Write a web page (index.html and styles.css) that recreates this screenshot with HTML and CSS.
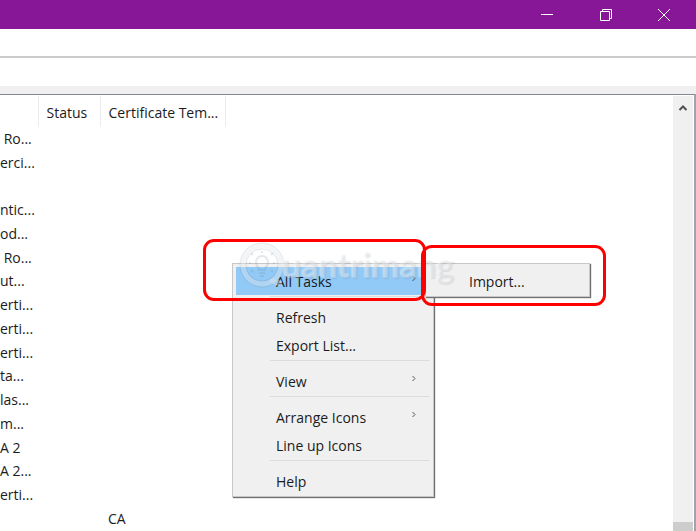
FILE: index.html
```html
<!DOCTYPE html>
<html lang="en">
<head>
<meta charset="utf-8">
<title>Certificates</title>
<link rel="stylesheet" href="styles.css">
</head>
<body>
<div class="window">
  <header class="titlebar">
    <button class="caption" aria-label="Minimize"><svg width="14" height="14" viewBox="0 0 14 14"><path d="M1 6.500h12"/></svg></button>
    <button class="caption" aria-label="Restore"><svg width="14" height="14" viewBox="0 0 14 14"><path d="M1.500 3.500h9v9h-9zM3.500 3.500v-2h9v9h-2"/></svg></button>
    <button class="caption" aria-label="Close"><svg width="14" height="14" viewBox="0 0 14 14"><path d="M1 1l12 12M13 1L1 13"/></svg></button>
  </header>
  <div class="menubar"></div>
  <div class="toolbar"></div>
  <main class="pane">
    <table class="list">
      <colgroup><col class="col-name"><col class="col-status"><col class="col-template"><col></colgroup>
      <thead><tr><th></th><th>Status</th><th>Certificate Tem...</th><th></th></tr></thead>
      <tbody>
        <tr><td> Ro...</td><td></td><td></td><td></td></tr>
        <tr><td>erci...</td><td></td><td></td><td></td></tr>
        <tr><td></td><td></td><td></td><td></td></tr>
        <tr><td>ntic...</td><td></td><td></td><td></td></tr>
        <tr><td>od...</td><td></td><td></td><td></td></tr>
        <tr><td> Ro...</td><td></td><td></td><td></td></tr>
        <tr><td>ut...</td><td></td><td></td><td></td></tr>
        <tr><td>erti...</td><td></td><td></td><td></td></tr>
        <tr><td>erti...</td><td></td><td></td><td></td></tr>
        <tr><td>erti...</td><td></td><td></td><td></td></tr>
        <tr><td>ta...</td><td></td><td></td><td></td></tr>
        <tr><td>las...</td><td></td><td></td><td></td></tr>
        <tr><td>m...</td><td></td><td></td><td></td></tr>
        <tr><td>A 2</td><td></td><td></td><td></td></tr>
        <tr><td>A 2...</td><td></td><td></td><td></td></tr>
        <tr><td>erti...</td><td></td><td></td><td></td></tr>
        <tr><td></td><td></td><td>CA</td><td></td></tr>
      </tbody>
    </table>
    <div class="scrollbar">
      <button class="scroll-up" aria-label="Scroll up"><svg width="10" height="8" viewBox="0 0 10 8"><path d="M1.500 6L5 2.500 8.500 6"/></svg></button>
      <div class="thumb"></div>
    </div>
  </main>
</div>

<div class="menu context" role="menu">
  <button class="item active" role="menuitem">All Tasks<svg class="arrow" width="6" height="8" viewBox="0 0 6 8"><path d="M1.500 1L4 3.500 1.500 6"/></svg></button>
  <hr>
  <button class="item" role="menuitem">Refresh</button>
  <button class="item" role="menuitem">Export List...</button>
  <hr>
  <button class="item" role="menuitem">View<svg class="arrow" width="6" height="8" viewBox="0 0 6 8"><path d="M1.500 1L4 3.500 1.500 6"/></svg></button>
  <hr>
  <button class="item" role="menuitem">Arrange Icons<svg class="arrow" width="6" height="8" viewBox="0 0 6 8"><path d="M1.500 1L4 3.500 1.500 6"/></svg></button>
  <button class="item" role="menuitem">Line up Icons</button>
  <hr>
  <button class="item" role="menuitem">Help</button>
</div>
<div class="menu submenu" role="menu">
  <button class="item" role="menuitem">Import...</button>
</div>

<div class="watermark">
  <svg width="48" height="48" viewBox="0 0 48 48">
    <g class="mark-shade"><circle cx="24" cy="24" r="22"/><circle cx="24" cy="24" r="16"/></g>
    <circle class="mark-ring" cx="24" cy="24" r="19"/>
    <path class="mark-ring" d="M33 38c3 4 6 4 11 4"/>
    <path class="mark-bulb" d="M21 29c0-3-3-4-3-8a6 6 0 0 1 12 0c0 4-3 5-3 8zM21 32h6M22 35h4M24 12v-2M15 14l-2-2M33 14l2-2M13 22h-2M35 22h2M15 29l-2 2M33 29l2 2"/>
  </svg>
  <span>uantrimang</span>
</div>
<div class="outline outline-tasks"></div>
<div class="outline outline-import"></div>
</body>
</html>
```

FILE: styles.css
```css
* { box-sizing: border-box; }

body {
  margin: 0;
  color: #1b1b1b;
  background: #fff;
  font: 14px/20px "Open Sans", "Noto Sans", sans-serif;
}

button {
  margin: 0;
  padding: 0;
  border: 0;
  background: none;
  color: inherit;
  font: inherit;
}

svg { fill: none; }

.window {
  display: flex;
  flex-direction: column;
  height: 100vh;
  overflow: hidden;
}

.titlebar {
  display: flex;
  flex: none;
  justify-content: flex-end;
  height: 29px;
  padding-right: 3px;
  background: #881798;
}

.caption {
  display: flex;
  align-items: center;
  justify-content: center;
  width: 58px;
}

.caption:first-child { width: 60px; }

.caption svg { stroke: #fff; }

.menubar {
  flex: none;
  height: 29px;
  border-bottom: 2px solid #cacaca;
}

.toolbar {
  flex: none;
  height: 36px;
  border-bottom: 8px solid #f0f0f0;
}

.pane {
  display: flex;
  flex: 1;
  min-height: 0;
  border-top: 1px solid #828790;
  border-right: 2px solid #a0a4aa;
  padding: 1px 1px 0 0;
}

.list {
  flex: 1;
  height: 100%;
  table-layout: fixed;
  border-collapse: collapse;
}

.col-name { width: 38px; }
.col-status { width: 62px; }
.col-template { width: 125px; }

.list th {
  height: 31px;
  padding: 2px 0 0 8px;
  border-right: 1px solid #ececec;
  font-weight: 400;
  text-align: left;
  white-space: nowrap;
}

.list th:last-child { border-right: 0; }

.list td {
  height: 23px;
  padding: 0 0 0 8px;
  white-space: pre;
}

.list td:first-child { padding-left: 0; }

.scrollbar {
  display: flex;
  flex-direction: column;
  justify-content: space-between;
  width: 20px;
  background: #f0f0f0;
}

.scroll-up {
  height: 24px;
  line-height: 0;
}

.scroll-up svg {
  stroke: #505050;
  stroke-width: 2;
}

.thumb {
  height: 9px;
  background: #cdcdcd;
}

.menu {
  position: absolute;
  top: 263px;
  padding: 3px 3px 1px;
  border: 1px solid #c8c8c8;
  background: #f0f0f0;
  box-shadow: 1px 1px 1px #707070;
}

.context {
  left: 232px;
  width: 202px;
}

.submenu {
  left: 425px;
  width: 165px;
}

.item {
  display: flex;
  align-items: center;
  justify-content: space-between;
  width: 100%;
  height: 28px;
  padding: 2px 13px 0 40px;
}

.active { background: #91c9f7; }

.arrow { stroke: #555; margin-bottom: 6px; }

.menu hr {
  height: 8px;
  margin: 0 0 0 34px;
  border: 0;
  background: linear-gradient(#dcdcdc, #dcdcdc) 0 1px / 100% 1px no-repeat;
}

.outline {
  position: absolute;
  border: 3px solid #f00;
  border-radius: 11px;
}

.outline-tasks {
  top: 239px;
  left: 203px;
  width: 223px;
  height: 62px;
}

.outline-import {
  top: 245px;
  left: 421px;
  width: 185px;
  height: 61px;
}

.watermark {
  position: absolute;
  top: 241px;
  left: 238px;
  display: flex;
  align-items: center;
  pointer-events: none;
}

.watermark span {
  margin-left: -4px;
  color: rgba(235, 240, 244, 0.3);
  font: 700 34px/40px Lato, sans-serif;
  text-shadow: 1px 1px 1px rgba(110, 120, 130, 0.16), -1px -1px 1px rgba(255, 255, 255, 0.3);
}

.mark-shade { stroke: rgba(120, 130, 140, 0.2); }

.mark-ring {
  stroke: rgba(225, 230, 234, 0.4);
  stroke-width: 5;
}

.mark-bulb {
  stroke: rgba(120, 140, 155, 0.2);
  stroke-width: 2;
}
```
